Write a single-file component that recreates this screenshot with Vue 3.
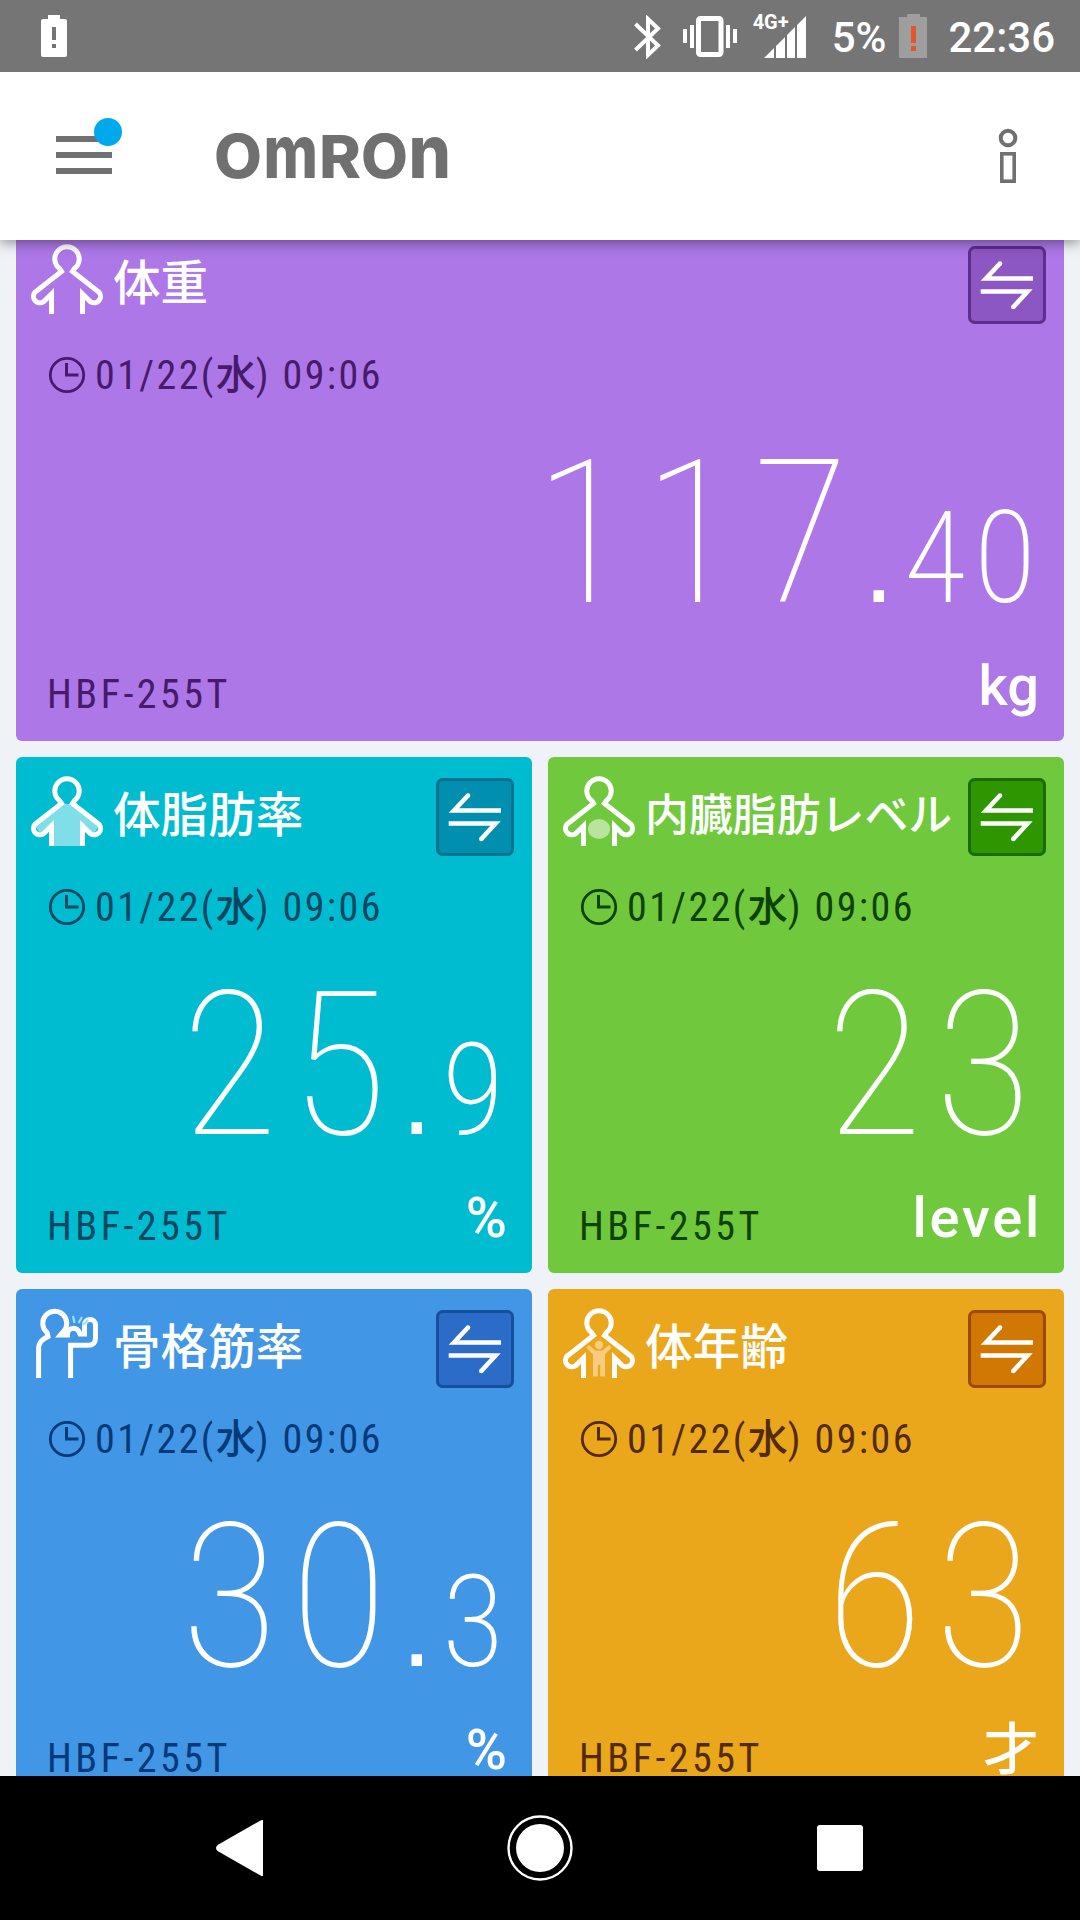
<template>
  <div class="screen">
    <div class="status-bar">
      <svg class="alert-battery" width="28" height="44" viewBox="0 0 28 44">
        <path fill="#fff" fill-rule="evenodd" d="M8 1h12v4h5q2 0 2 2v34q0 2-2 2H3q-2 0-2-2V7q0-2 2-2h5zM12 13v13h4V13zM12 30v4h4v-4z" />
      </svg>
      <div class="status-right">
        <svg class="bluetooth" width="28" height="44" viewBox="0 0 28 44">
          <path fill="none" stroke="#fff" stroke-width="4" d="M1.500 9L24 30.500L14 40V4L24 13.500L1.500 35" />
        </svg>
        <svg class="vibrate" width="56" height="44" viewBox="0 0 56 44">
          <rect x="16.500" y="3.500" width="22.500" height="36" rx="2" fill="none" stroke="#fff" stroke-width="5" />
          <path fill="#fff" d="M1 14h4v14H1zM8 10h4v23H8zM44 10h4v23h-4zM51 14h4v14h-4z" />
        </svg>
        <div class="signal">
          <span class="network">4G+</span>
          <svg width="44" height="42" viewBox="0 0 44 42">
            <path fill="#fff" d="M0 42L10 32V42zM12 30L21 21V42H12zM23 19L31 11V42H23zM33 9L42 0V42H33z" />
          </svg>
        </div>
        <span class="percent">5%</span>
        <svg class="battery" width="28" height="44" viewBox="0 0 28 44">
          <path fill="#9e9e9e" d="M8 0h13v3h7v41H0V3h8z" />
          <path fill="#e2562b" d="M12 12h5v17h-5zM12 32h5v5h-5z" />
        </svg>
        <span class="clock">22:36</span>
      </div>
    </div>

    <header class="app-bar">
      <button class="menu-btn">
        <i></i><i></i><i></i>
        <b class="menu-dot"></b>
      </button>
      <svg class="logo" width="256" height="120" viewBox="-10 -10 256 120">
        <text
          v-for="(l, i) in logo"
          :key="i"
          :x="l.x"
          y="71.500"
          :font-size="l.size"
          :textLength="l.width"
          lengthAdjust="spacingAndGlyphs"
        >{{ l.char }}</text>
      </svg>
      <svg class="info" width="20" height="56" viewBox="0 0 20 56">
        <circle cx="10" cy="10" r="7.300" fill="none" stroke="#707070" stroke-width="4" />
        <rect x="3.800" y="25.800" width="12.400" height="27.400" fill="none" stroke="#707070" stroke-width="3.600" />
      </svg>
    </header>

    <main class="panels">
      <div class="grid">
        <section v-for="card in cards" :key="card.title" class="card" :class="card.theme">
          <div class="card-head">
            <svg class="figure" width="74" height="72" viewBox="0 0 74 72">
              <path v-if="card.theme === 'fat'" fill="#fff" fill-opacity=".5" d="M30 28H42L68 50L62 59L51.500 50V70H20.500V50L10 59L4 50z" />
              <ellipse v-if="card.theme === 'visceral'" cx="36" cy="53" rx="11" ry="10" fill="#fff" fill-opacity=".5" />
              <g v-if="card.theme === 'age'" fill="#f8cc80">
                <circle cx="36" cy="37" r="4.200" />
                <path d="M23.500 39.500L26 37L32.500 42.500H39.500L46 37L48.500 39.500L42 46.500V68.500H37.200V57H34.800V68.500H30V46.500z" />
              </g>
              <g v-if="card.theme === 'muscle'" fill="none" stroke="#fff" stroke-width="5">
                <path d="M7.600 70V41C7.600 34 11 32 17 28.500L16 24.500A12 12 0 1 1 32.500 23.500L29.500 27H39" />
                <path d="M36 26C38 19 46 18 49 26H53.500V17C53.500 9.500 64.500 9.500 64.500 17V30C64.500 35.500 62 37.300 57 37.300H39.600V70" />
                <path d="M42 8L43.500 15M51 9L47.500 15M57 12L52 17" stroke="#9fe0ff" stroke-width="2.200" />
              </g>
              <path v-else fill="none" stroke="#fff" stroke-width="5" d="M20.500 70V50L12.500 57.700A6.400 6.400 0 0 1 3.900 48.400L30.500 27.500L28.500 24.500A12.200 12.200 0 1 1 43.500 24.500L41.500 27.500L68.100 48.400A6.400 6.400 0 0 1 59.500 57.700L51.500 50V70" />
            </svg>
            <h2 class="title">{{ card.title }}</h2>
            <button class="swap">
              <svg width="78" height="78" viewBox="0 0 78 78">
                <path fill="none" stroke="#fff" stroke-width="4.600" d="M32 17.500L18 32.500H65M12.700 45.500H59.500L45.300 61" />
                <circle cx="32" cy="17.500" r="2.300" fill="#fff" />
                <circle cx="45.300" cy="61" r="2.300" fill="#fff" />
              </svg>
            </button>
          </div>
          <div class="time">
            <svg width="38" height="38" viewBox="0 0 38 38" fill="none" stroke="currentColor">
              <circle cx="19" cy="19" r="16.700" stroke-width="2.800" />
              <path d="M18.500 7V19H30.500" stroke-width="3" />
            </svg>
            <span>01/22(<em>水</em>) 09:06</span>
          </div>
          <div class="value">
            <span class="whole">{{ card.whole }}</span>
            <template v-if="card.decimal">
              <span class="point">.</span>
              <span class="decimal">{{ card.decimal }}</span>
            </template>
          </div>
          <div class="card-foot">
            <span class="model">HBF-255T</span>
            <span class="unit">{{ card.unit }}</span>
          </div>
        </section>
      </div>
    </main>

    <nav class="nav-bar">
      <svg width="47" height="60" viewBox="0 0 47 60">
        <path fill="#fff" stroke="#fff" stroke-width="4" stroke-linejoin="round" d="M46 4V56L3 31.500Q1 30 3 28.500z" />
      </svg>
      <svg width="66" height="66" viewBox="0 0 66 66">
        <circle cx="33" cy="33" r="31.500" fill="none" stroke="#fff" stroke-width="2.400" />
        <circle cx="33" cy="33" r="24" fill="#fff" />
      </svg>
      <i class="recent"></i>
    </nav>
  </div>
</template>

<script setup>
const logo = [
  { char: 'O', x: -2, width: 48, size: 60 },
  { char: 'm', x: 47.5, width: 54.5, size: 74 },
  { char: 'R', x: 103, width: 42, size: 59 },
  { char: 'O', x: 145, width: 47, size: 60 },
  { char: 'n', x: 192.5, width: 42.5, size: 74 }
]

const cards = [
  { theme: 'weight', title: '体重', whole: '117', decimal: '40', unit: 'kg' },
  { theme: 'fat', title: '体脂肪率', whole: '25', decimal: '9', unit: '%' },
  { theme: 'visceral', title: '内臓脂肪レベル', whole: '23', decimal: '', unit: 'level' },
  { theme: 'muscle', title: '骨格筋率', whole: '30', decimal: '3', unit: '%' },
  { theme: 'age', title: '体年齢', whole: '63', decimal: '', unit: '才' }
]
</script>

<style>
body {
  margin: 0;
}
</style>

<style scoped>
.screen {
  width: 1080px;
  height: 1920px;
  display: flex;
  flex-direction: column;
  overflow: hidden;
  background: #eff3f7;
  font-family: Roboto, "Noto Sans CJK JP", sans-serif;
}

svg {
  display: block;
  flex: none;
}

button {
  border: none;
  background: none;
  padding: 0;
}

.status-bar {
  position: relative;
  z-index: 2;
  flex: none;
  height: 72px;
  box-sizing: border-box;
  padding: 0 25px 0 40px;
  display: flex;
  align-items: center;
  justify-content: space-between;
  background: #757575;
  color: #fff;
}

.status-right {
  display: flex;
  align-items: center;
  font-size: 42px;
  font-weight: 500;
}

.bluetooth {
  margin-top: 2px;
}

.vibrate {
  margin: 2px 0 0 20px;
}

.signal {
  position: relative;
  margin: 1px 0 0 26px;
}

.network {
  position: absolute;
  left: -11px;
  top: -4px;
  font-size: 20px;
  line-height: 20px;
  font-weight: 700;
}

.percent {
  margin-left: 24px;
  line-height: 72px;
  margin-top: 3px;
}

.battery {
  margin-left: 13px;
}

.clock {
  margin-left: 21px;
  margin-top: 3px;
}

.app-bar {
  position: relative;
  z-index: 1;
  flex: none;
  height: 168px;
  box-sizing: border-box;
  padding: 0 62px 0 56px;
  display: flex;
  align-items: center;
  background: #fff;
  box-shadow: 0 3px 12px rgba(0, 0, 0, 0.4);
}

.menu-btn {
  position: relative;
  width: 56px;
  height: 38px;
  margin-top: -2px;
  display: flex;
  flex-direction: column;
  justify-content: space-between;
}

.menu-btn i {
  width: 56px;
  height: 6px;
  background: #707070;
}

.menu-dot {
  position: absolute;
  left: 38px;
  top: -18px;
  width: 28px;
  height: 28px;
  border-radius: 50%;
  background: #00a9ec;
}

.logo {
  margin-left: 94px;
  fill: #707070;
  font-family: Inter, sans-serif;
  font-weight: 800;
}

.info {
  margin-left: auto;
}

.panels {
  flex: 1;
  min-height: 0;
  overflow: hidden;
}

.grid {
  display: grid;
  grid-template-columns: 516px 516px;
  grid-auto-rows: 516px;
  gap: 16px;
  padding: 0 16px;
  margin-top: -15px;
}

.card {
  box-sizing: border-box;
  padding: 21px 18px 0 15px;
  display: flex;
  flex-direction: column;
  border-radius: 6px;
  background: var(--bg);
}

.weight {
  grid-column: span 2;
  --bg: #ad77e7;
  --btn: #8d57c3;
  --edge: #5c2e8e;
  --ink: #471a6b;
}

.fat {
  --bg: #00bcd1;
  --btn: #008fae;
  --edge: #057390;
  --ink: #044760;
}

.visceral {
  --bg: #70c93d;
  --btn: #2e9600;
  --edge: #1b6c00;
  --ink: #0d4203;
}

.muscle {
  --bg: #4296e6;
  --btn: #2a6cc8;
  --edge: #174f9f;
  --ink: #053a78;
}

.age {
  --bg: #eba71b;
  --btn: #d17804;
  --edge: #9b4904;
  --ink: #522b05;
}

.card-head {
  height: 78px;
  display: flex;
  align-items: flex-start;
}

.figure {
  margin-top: -2px;
}

.title {
  flex: 1;
  margin: 0 0 0 8px;
  white-space: nowrap;
  font-size: 47.600px;
  line-height: 76px;
  font-weight: 500;
  color: #fff;
}

.visceral .title {
  font-size: 43.900px;
}

.swap {
  flex: none;
  width: 78px;
  height: 78px;
  border-radius: 7px;
  background: var(--btn);
  box-shadow: inset 0 0 0 3px var(--edge);
}

.time {
  height: 40px;
  margin: 31px 0 0 17px;
  display: flex;
  align-items: center;
  font-size: 40px;
  line-height: 40px;
  font-stretch: 85%;
  letter-spacing: 2.400px;
  color: var(--ink);
}

.time span {
  margin: 2px 0 0 9px;
  white-space: nowrap;
}

.time em {
  font-style: normal;
  font-weight: 500;
  letter-spacing: 0;
}

.value {
  height: 220px;
  line-height: 220px;
  margin-top: 29px;
  padding-right: 10px;
  display: flex;
  justify-content: flex-end;
  align-items: baseline;
  color: #fff;
  font-size: 201px;
  font-weight: 150;
}

.whole {
  font-stretch: 85%;
  letter-spacing: 12px;
}

.whole:last-child {
  margin-right: -8px;
}

.point {
  margin: 0 10px 0 2px;
  font-family: "Liberation Sans", sans-serif;
  font-size: 110px;
  font-weight: 400;
}

.decimal {
  margin-right: -8px;
  font-size: 128px;
  font-weight: 180;
  font-stretch: 78%;
  letter-spacing: 8px;
}

.card-foot {
  height: 70px;
  line-height: 70px;
  margin-top: 10px;
  padding: 0 10px 0 16px;
  display: flex;
  justify-content: space-between;
  align-items: baseline;
}

.model {
  font-size: 40px;
  font-stretch: 85%;
  letter-spacing: 3.500px;
  color: var(--ink);
}

.unit {
  margin-right: -3px;
  font-size: 56px;
  font-weight: 500;
  font-stretch: 95%;
  color: #fff;
  transform: translateY(-3px);
}

.visceral .unit {
  margin-right: -6px;
  letter-spacing: 2.800px;
}

.nav-bar {
  flex: none;
  height: 144px;
  box-sizing: border-box;
  padding: 0 217px 0 216px;
  display: flex;
  align-items: center;
  justify-content: space-between;
  background: #000;
}

.recent {
  width: 46px;
  height: 46px;
  border-radius: 3px;
  background: #fff;
}
</style>
